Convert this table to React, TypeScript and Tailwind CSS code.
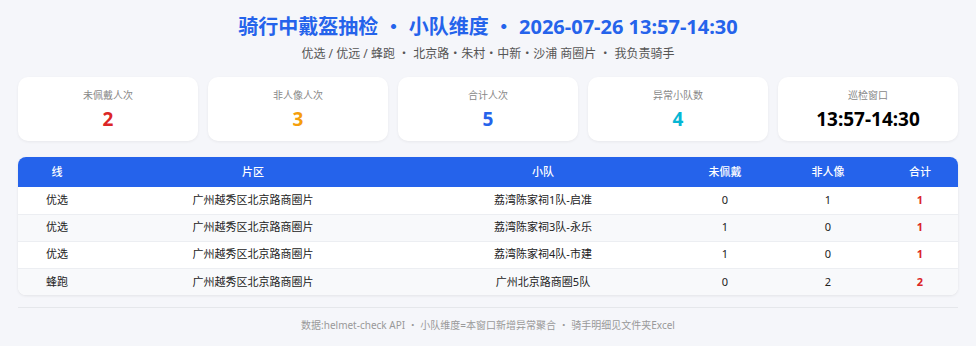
const stats = [
  { label: "未佩戴人次", value: "2", color: "text-[#dc2626]" },
  { label: "非人像人次", value: "3", color: "text-[#f59e0b]" },
  { label: "合计人次", value: "5", color: "text-[#2563eb]" },
  { label: "异常小队数", value: "4", color: "text-[#06b6d4]" },
  { label: "巡检窗口", value: "13:57-14:30", color: "text-black" }
];

const rows = [
  { line: "优选", area: "广州越秀区北京路商圈片", team: "荔湾陈家祠1队-启准", noHelmet: 0, nonFace: 1, total: 1 },
  { line: "优选", area: "广州越秀区北京路商圈片", team: "荔湾陈家祠3队-永乐", noHelmet: 1, nonFace: 0, total: 1 },
  { line: "优选", area: "广州越秀区北京路商圈片", team: "荔湾陈家祠4队-市建", noHelmet: 1, nonFace: 0, total: 1 },
  { line: "蜂跑", area: "广州越秀区北京路商圈片", team: "广州北京路商圈5队", noHelmet: 0, nonFace: 2, total: 2 }
];

export default function App() {
  return (
    <div className="min-h-[346px] w-[976px] bg-[#f5f6fa] px-[18px] pt-[13px] font-['Noto_Sans','Noto_Sans_CJK_SC',sans-serif] text-[#222]">
      <header className="text-center">
        <h1 className="text-[20px] font-bold leading-[28px] text-[#2563eb]">
          骑行中戴盔抽检 ・ 小队维度 ・ 2026-07-26 13:57-14:30
        </h1>
        <p className="mt-[4px] text-[12px] leading-[18px] text-[#555]">
          优选 / 优远 / 蜂跑 ・ 北京路・朱村・中新・沙浦 商圈片 ・ 我负责骑手
        </p>
      </header>

      <section className="mt-[14px] grid grid-cols-5 gap-[10px]">
        {stats.map((s) => (
          <div
            key={s.label}
            className="flex h-[64px] flex-col items-center rounded-[10px] bg-white pt-[11px] shadow-[0_1px_3px_rgba(0,0,0,0.06)]"
          >
            <p className="text-[10px] leading-[14px] text-[#888]">{s.label}</p>
            <p className={`mt-[5px] text-[19px] font-bold leading-[24px] ${s.color}`}>{s.value}</p>
          </div>
        ))}
      </section>

      <div className="mt-[16px] overflow-hidden rounded-[8px] bg-white shadow-[0_1px_3px_rgba(0,0,0,0.08)]">
        <table className="w-full table-fixed border-collapse text-[11px]">
          <colgroup>
            <col className="w-[78px]" />
            <col className="w-[314px]" />
            <col className="w-[266px]" />
            <col className="w-[98px]" />
            <col className="w-[108px]" />
            <col />
          </colgroup>
          <thead>
            <tr className="h-[30px] bg-[#2563eb] text-white">
              <th className="font-medium">线</th>
              <th className="font-medium">片区</th>
              <th className="font-medium">小队</th>
              <th className="font-medium">未佩戴</th>
              <th className="font-medium">非人像</th>
              <th className="font-medium">合计</th>
            </tr>
          </thead>
          <tbody>
            {rows.map((r, i) => (
              <tr
                key={r.team}
                className={`h-[27px] text-center ${i % 2 === 1 ? "bg-[#f8f9fb]" : "bg-white"} ${
                  i < rows.length - 1 ? "border-b border-[#eceef2]" : ""
                }`}
              >
                <td>{r.line}</td>
                <td>{r.area}</td>
                <td>{r.team}</td>
                <td>{r.noHelmet}</td>
                <td>{r.nonFace}</td>
                <td className="font-bold text-[#dc2626]">{r.total}</td>
              </tr>
            ))}
          </tbody>
        </table>
      </div>

      <footer className="mt-[12px] border-t border-[#e5e7eb] pt-[9px] text-center text-[10px] leading-[16px] text-[#999]">
        数据:helmet-check API ・ 小队维度=本窗口新增异常聚合 ・ 骑手明细见文件夹Excel
      </footer>
    </div>
  );
}
